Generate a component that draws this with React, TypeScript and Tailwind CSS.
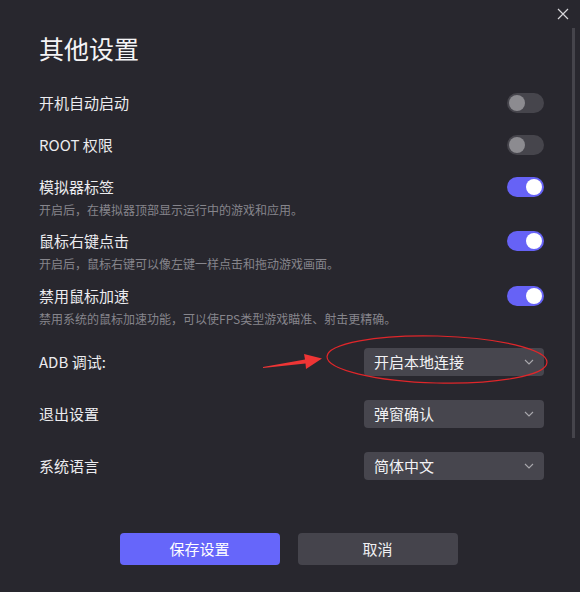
import React from "react";

function Toggle({ on }: { on: boolean }) {
  return (
    <div
      className={
        "w-[37px] h-[20px] rounded-full flex items-center px-[2px] shrink-0 " +
        (on ? "bg-[#6662f6] justify-end" : "bg-[#46454c] justify-start")
      }
    >
      <div className={"w-[16px] h-[16px] rounded-full " + (on ? "bg-white" : "bg-[#8c8b90]")} />
    </div>
  );
}

function ToggleRow({ label, desc, on, top }: { label: string; desc?: string; on: boolean; top: string }) {
  return (
    <div className={"flex flex-col " + top}>
      <div className="flex items-center justify-between h-[20px]">
        <span className="text-[15px] text-[#ececef] leading-[20px]">{label}</span>
        <Toggle on={on} />
      </div>
      {desc && <div className="mt-[4px] h-[18px] text-[12px] leading-[18px] text-[#86858c]">{desc}</div>}
    </div>
  );
}

function SelectRow({ label, value, top }: { label: string; value: string; top: string }) {
  return (
    <div className={"flex items-center justify-between h-[28px] " + top}>
      <span className="text-[15px] text-[#ececef]">{label}</span>
      <div className="w-[180px] h-[28px] rounded-[4px] bg-[#47464e] flex items-center justify-between pl-[10px] pr-[10px]">
        <span className="text-[15px] text-[#f2f2f4]">{value}</span>
        <svg width="10" height="6" viewBox="0 0 10 6" fill="none">
          <path d="M1 1l4 4 4-4" stroke="#a9a8ad" strokeWidth="1.1" />
        </svg>
      </div>
    </div>
  );
}

export default function App() {
  return (
    <div className="relative w-[580px] h-[592px] bg-[#28272e] overflow-hidden font-['Noto_Sans_CJK_SC','Microsoft_YaHei',sans-serif]">
      {/* close */}
      <div className="absolute right-[11px] top-[8px] w-[12px] h-[12px]">
        <svg width="12" height="12" viewBox="0 0 12 12" fill="none">
          <path d="M1 1l10 10M11 1L1 11" stroke="#d6d6da" strokeWidth="1.2" />
        </svg>
      </div>
      {/* scrollbar */}
      <div className="absolute left-[572px] top-[28px] w-[3px] h-[410px] bg-[#45444b]" />

      <div className="flex flex-col pl-[39px] pr-[36px]">
        <div className="mt-[30px] h-[36px] text-[25px] leading-[36px] text-[#f4f4f6]">其他设置</div>
        <ToggleRow label="开机自动启动" on={false} top="mt-[27px]" />
        <ToggleRow label="ROOT 权限" on={false} top="mt-[22px]" />
        <ToggleRow label="模拟器标签" desc="开启后，在模拟器顶部显示运行中的游戏和应用。" on={true} top="mt-[22px]" />
        <ToggleRow label="鼠标右键点击" desc="开启后，鼠标右键可以像左键一样点击和拖动游戏画面。" on={true} top="mt-[12px]" />
        <ToggleRow label="禁用鼠标加速" desc="禁用系统的鼠标加速功能，可以使FPS类型游戏瞄准、射击更精确。" on={true} top="mt-[13px]" />
        <SelectRow label="ADB 调试:" value="开启本地连接" top="mt-[20px]" />
        <SelectRow label="退出设置" value="弹窗确认" top="mt-[24px]" />
        <SelectRow label="系统语言" value="简体中文" top="mt-[24px]" />
        <div className="mt-[53px] flex justify-center gap-[18px] pr-[6px]">
          <button className="w-[160px] h-[32px] rounded-[4px] bg-[#6666fa] text-[15px] text-white">保存设置</button>
          <button className="w-[160px] h-[32px] rounded-[4px] bg-[#45444c] text-[15px] text-[#f0f0f2]">取消</button>
        </div>
      </div>

      {/* annotation overlay */}
      <svg className="absolute left-0 top-0 pointer-events-none" width="580" height="592" viewBox="0 0 580 592">
        <ellipse cx="437" cy="359.5" rx="110" ry="23.5" fill="none" stroke="#e0262a" strokeWidth="1.2" transform="rotate(1.5 437 359.5)" />
        <polygon points="263,367 305,359.5 304,354 322,358.5 306,369 305.5,363.5 263,368" fill="#ee3535" />
      </svg>
    </div>
  );
}
